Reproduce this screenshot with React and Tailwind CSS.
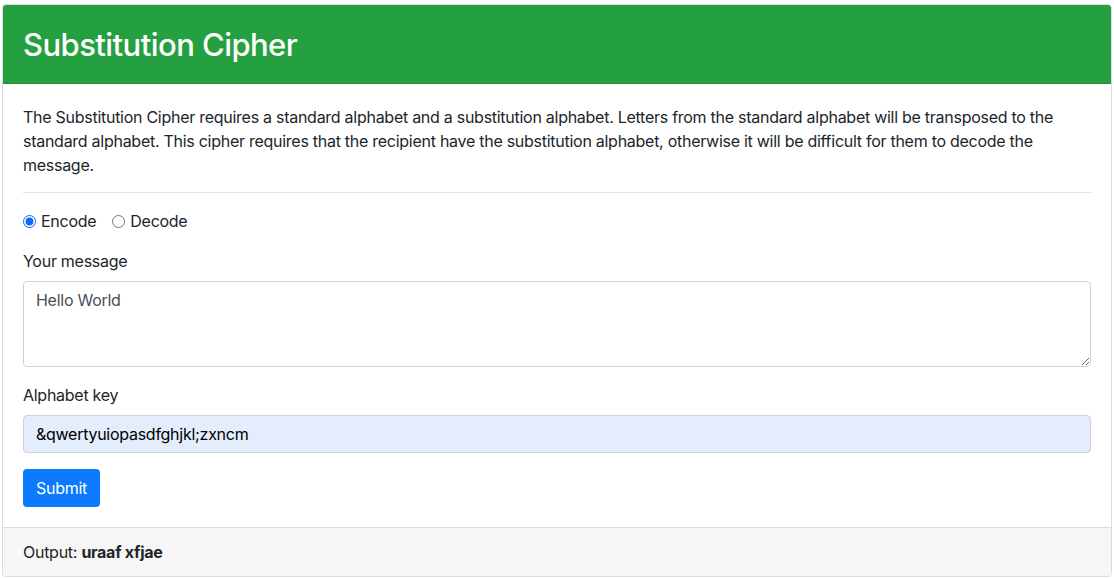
import React, { useState } from "react";

const App = () => {
    const [mode, setMode] = useState("encode");

    return (
        <div
            className="bg-white text-[#212529] text-base tracking-[-0.27px]"
            style={{ fontFamily: "Inter, 'Liberation Sans', sans-serif" }}
        >
            <div className="mx-[2px] mt-[4px] border border-[#dcdcdc] rounded-[4px] overflow-hidden">
                {/* Header */}
                <div className="h-[79px] bg-[#24a040] px-5 flex items-center border-b border-[#1f8b38]">
                    <h2 className="text-white text-[31px] font-medium leading-none tracking-[-0.55px]">
                        Substitution Cipher
                    </h2>
                </div>

                {/* Body */}
                <div className="px-5 pt-[21px] pb-5">
                    <p className="leading-6 text-[16px]">
                        The Substitution Cipher requires a standard alphabet and a substitution
                        alphabet. Letters from the standard alphabet will be transposed to the
                        standard alphabet. This cipher requires that the recipient have the
                        substitution alphabet, otherwise it will be difficult for them to decode
                        the message.
                    </p>
                    <hr className="mt-[15px] mb-4 border-t border-[#e2e2e2]" />

                    <div className="flex items-center gap-4 h-6">
                        <label className="flex items-center gap-[5px]">
                            <input
                                type="radio"
                                checked={mode === "encode"}
                                onChange={() => setMode("encode")}
                                className="w-[13px] h-[13px] m-0 accent-[#0a6cf5]"
                            />
                            <span>Encode</span>
                        </label>
                        <label className="flex items-center gap-[5px]">
                            <input
                                type="radio"
                                checked={mode === "decode"}
                                onChange={() => setMode("decode")}
                                className="w-[13px] h-[13px] m-0 accent-[#0a6cf5]"
                            />
                            <span>Decode</span>
                        </label>
                    </div>

                    <div className="mt-4">
                        <label className="block leading-6 mb-2">Your message</label>
                        <textarea
                            defaultValue="Hello World"
                            className="block w-full h-[86px] border border-[#ced4da] rounded-[4px] px-3 py-[6px] leading-6 text-[#495057] resize-y"
                        />
                    </div>

                    <div className="mt-4">
                        <label className="block leading-6 mb-2">Alphabet key</label>
                        <input
                            type="text"
                            defaultValue="&qwertyuiopasdfghjkl;zxncm"
                            className="block w-full h-[38px] border border-[#ced4da] rounded-[4px] px-3 bg-[#e4edfc] text-black"
                        />
                    </div>

                    <button className="mt-4 h-[38px] w-[77px] bg-[#0a7bff] text-white rounded-[4px]">
                        Submit
                    </button>
                </div>

                {/* Footer */}
                <div className="h-[49px] bg-[#f6f6f6] border-t border-[#dcdcdc] px-5 flex items-center">
                    <span>
                        Output: <b className="font-bold">uraaf xfjae</b>
                    </span>
                </div>
            </div>
        </div>
    );
};

export default App;
